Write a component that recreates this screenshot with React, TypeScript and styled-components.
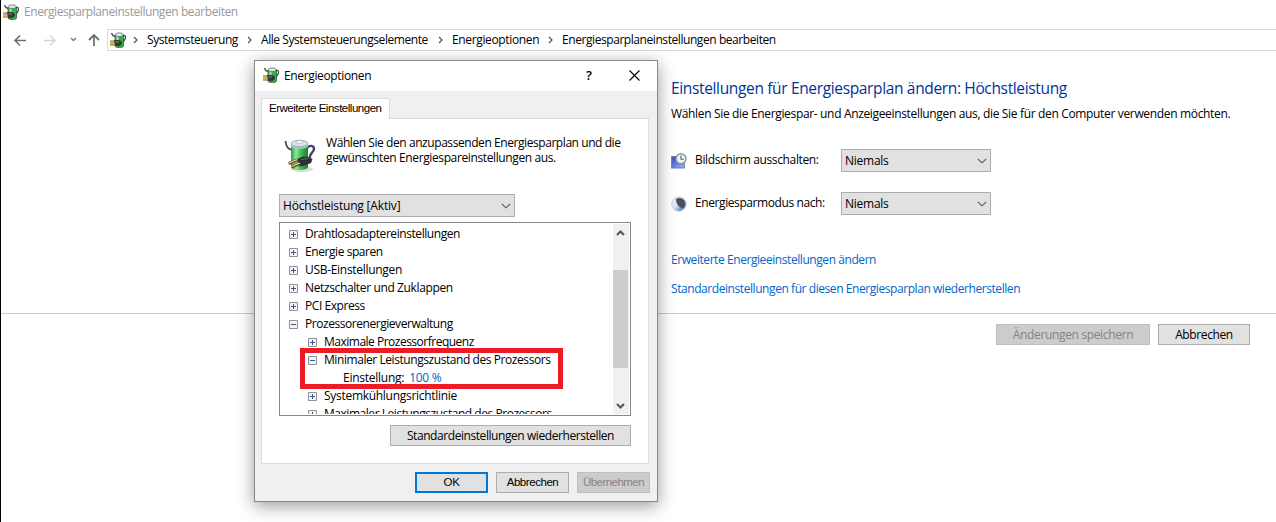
import styled, { createGlobalStyle } from 'styled-components';
import type { ReactNode } from 'react';

const GlobalStyle = createGlobalStyle`
  * {
    box-sizing: border-box;
  }

  body {
    margin: 0;
    background: #fff;
    color: #000;
    font-family: 'Open Sans', 'Noto Sans', sans-serif;
    font-size: 12px;
    line-height: 15px;
    overflow: hidden;
  }
`;

const Text = styled.span<{ $spacing?: number }>`
  white-space: nowrap;
  letter-spacing: ${props => props.$spacing ?? -0.43}px;
`;

const Page = styled.div`
  position: relative;
  width: 1276px;
  height: 522px;
  border-left: 1px solid #000;
  overflow: hidden;
`;

const TitleBar = styled.header`
  display: flex;
  align-items: center;
  gap: 5px;
  height: 29px;
  padding: 0 0 6px 2px;
  color: #999;
`;

const NavBar = styled.nav`
  display: flex;
  height: 22px;
`;

const NavButtons = styled.div`
  display: flex;
  width: 106px;
  padding-left: 12px;
`;

const AddressBar = styled.div`
  display: flex;
  align-items: center;
  flex: 1;
  padding: 0 0 1px 2px;
  border: 1px solid #d9d9d9;
  border-right: none;
`;

const Crumbs = styled.div`
  display: flex;
  margin-left: 7px;
`;

const Crumb = styled.div<{ $width: number }>`
  display: flex;
  align-items: center;
  width: ${props => props.$width}px;
`;

const CrumbArrow = styled.svg`
  flex: none;
  width: 5px;
  height: 8px;
  margin-right: 9px;
`;

const Content = styled.main`
  height: 263px;
  padding: 27px 0 0 670px;
  border-bottom: 1px solid #ccc;
`;

const Heading = styled.h1`
  margin: 0;
  color: #003399;
  font-size: 15.5px;
  font-weight: 400;
  line-height: 20px;
`;

const Intro = styled.p`
  margin: 8px 0 28px;
`;

const SettingRow = styled.div`
  display: flex;
  align-items: center;
  height: 23px;
  margin-bottom: 20px;
`;

const SettingLabel = styled.div`
  width: 146px;
  margin-left: 8px;
  padding-bottom: 2px;
`;

const Select = styled.div<{ $width: number }>`
  display: flex;
  align-items: center;
  justify-content: space-between;
  width: ${props => props.$width}px;
  height: 23px;
  padding: 0 3px;
  background: #e1e1e1;
  border: 1px solid #adadad;
`;

const Links = styled.div`
  display: flex;
  flex-direction: column;
  gap: 14px;
  padding-top: 17px;
`;

const Link = styled.a`
  color: #0066cc;
`;

const PageActions = styled.footer`
  display: flex;
  gap: 8px;
  padding: 10px 0 0 995px;
`;

const Button = styled.button<{ $width: number; $primary?: boolean }>`
  display: flex;
  align-items: center;
  justify-content: center;
  width: ${props => props.$width}px;
  height: 21px;
  padding: 0;
  background: #e1e1e1;
  border: ${props => (props.$primary ? '2px solid #0078d7' : '1px solid #adadad')};
  color: #000;
  font: inherit;

  &:disabled {
    background: #ccc;
    border-color: #bfbfbf;
    color: #838383;
  }
`;

const Dialog = styled.section`
  position: absolute;
  top: 60px;
  left: 253px;
  width: 404px;
  height: 442px;
  background: #f0f0f0;
  border: 1px solid #888;
  box-shadow: 0 4px 16px rgba(0, 0, 0, 0.4);
`;

const DialogTitle = styled.div`
  display: flex;
  align-items: center;
  height: 30px;
  padding: 0 17px 2px 8px;
  background: #fff;
`;

const DialogName = styled.div`
  flex: 1;
  margin-left: 5px;
`;

const HelpMark = styled.span`
  margin-right: 37px;
  font-size: 13px;
  font-weight: 600;
`;

const Tab = styled.div`
  position: relative;
  width: 129px;
  height: 21px;
  margin: 7px 0 -1px 6px;
  padding: 2px 0 0 7px;
  background: #fff;
  border: 1px solid #dcdcdc;
  border-bottom: none;
  font-family: 'Liberation Sans', sans-serif;
  font-size: 11.5px;
`;

const Panel = styled.div`
  width: 388px;
  height: 346px;
  margin-left: 6px;
  padding: 16px 17px 0;
  background: #fff;
  border: 1px solid #dcdcdc;
`;

const Description = styled.div`
  display: flex;
  gap: 10px;
  height: 59px;
  padding-left: 5px;
`;

const DescriptionText = styled.div`
  display: flex;
  flex-direction: column;
`;

const TreeBox = styled.div`
  display: flex;
  width: 352px;
  height: 194px;
  margin: 5px 0 9px;
  padding: 1px;
  border: 1px solid #828790;
`;

const Tree = styled.div`
  position: relative;
  flex: 1;
  overflow: hidden;
`;

const TreeRow = styled.div<{ $indent: number }>`
  display: flex;
  align-items: flex-start;
  height: 18px;
  padding: 2px 0 0 ${props => props.$indent}px;
`;

const ExpanderSvg = styled.svg`
  flex: none;
  width: 9px;
  height: 9px;
  margin: 4px 7px 0 0;
`;

const Value = styled.span`
  margin-left: 5px;
  color: #0066cc;
  letter-spacing: -0.3px;
`;

const Highlight = styled.div`
  position: absolute;
  top: 124px;
  left: 19px;
  width: 263px;
  height: 41px;
  border: 5px solid #ed1c24;
`;

const ScrollBar = styled.div`
  display: flex;
  flex-direction: column;
  width: 16px;
  background: #f0f0f0;
`;

const ScrollArrow = styled.svg`
  width: 15px;
  height: 17px;
`;

const ScrollThumb = styled.div`
  width: 15px;
  height: 98px;
  margin: 29px 0;
  background: #cdcdcd;
`;

const PanelActions = styled.div`
  display: flex;
  justify-content: flex-end;
  width: 352px;
`;

const DialogActions = styled.div`
  display: flex;
  gap: 8px;
  margin: 8px 0 0 160px;
  font-family: 'Liberation Sans', sans-serif;
  font-size: 11.5px;
`;

const IconSvg = styled.svg`
  flex: none;
`;

const LargeIconSvg = styled(IconSvg)`
  margin-top: 3px;
`;

const BatteryIcon = () => (
  <LargeIconSvg width="32" height="34" viewBox="0 0 32 34">
    <defs>
      <linearGradient id="cell">
        <stop offset="0" stopColor="#2e9a3e" />
        <stop offset="0.3" stopColor="#8ce89a" />
        <stop offset="0.55" stopColor="#43c557" />
        <stop offset="1" stopColor="#1e7a30" />
      </linearGradient>
    </defs>
    <ellipse cx="18" cy="31" rx="11" ry="3" fill="#d9dcd9" />
    <path d="M1.5 3c.5 5 2.5 8 5.5 8.5" fill="none" stroke="#454b66" strokeWidth="1.8" />
    <path d="M23 10c2-3 7-3 7 1 0 3-5 5-4 9" fill="none" stroke="#3f4560" strokeWidth="2.4" />
    <path d="M7 6v23c0 4 17 4 17 0V6z" fill="url(#cell)" />
    <path d="M7 6v2.5c2 3 15 3 17 0V6z" fill="#b7c4cc" />
    <ellipse cx="15.5" cy="5.5" rx="8.5" ry="3.2" fill="#d7e2ea" stroke="#8f9ea9" strokeWidth="0.8" />
    <ellipse cx="15.5" cy="4" rx="3.5" ry="1.5" fill="#f8fbff" stroke="#9cabb8" strokeWidth="0.6" />
    <path d="m13 21 6-2.5 5 .5 4.5 2-1.5 4-8 3-4 .5z" fill="#2c2e38" />
    <path d="m17 21.5 7-1" stroke="#666a78" />
    <path d="m4.5 25.5 9-3.5M7.5 29l8.5-3.5" stroke="#74552e" strokeWidth="3" />
    <path d="m4.5 25 9-3.5M7.5 28.5l8.5-3.5" stroke="#e8cf94" strokeWidth="1.3" />
  </LargeIconSvg>
);

const SmallBatteryIcon = () => (
  <IconSvg width="16" height="16" viewBox="0 0 16 16">
    <path d="M1.500 1c.5 2 1.5 3 3.5 3.5M13 3.500c3-.5 3.2 2 1.700 4s-1 3-3.700 4" fill="none" stroke="#454a49" strokeWidth="1.3" />
    <path d="M5 3v11c0 2 8.500 2 8.500 0V3z" fill="#30b33f" stroke="#27672f" strokeWidth="0.8" />
    <path d="M7.500 4v5" stroke="#a3f1a5" strokeWidth="2" />
    <ellipse cx="9.2" cy="2.7" rx="4" ry="1.8" fill="#e4ecf5" stroke="#596472" strokeWidth="0.8" />
    <path d="M4 8h4.500c2 0 3.500 1.500 3.500 3s-1.500 3-3.500 3H5z" fill="#35373b" />
    <path d="M5.500 10H9" stroke="#85888c" />
    <path d="M0 9.500h4M0 12.500h4.500" stroke="#8a6712" strokeWidth="2" />
    <path d="M0 9.200h4M0 12.200h4.500" stroke="#e9bd38" strokeWidth="1" />
  </IconSvg>
);

const DisplayIcon = () => (
  <IconSvg width="16" height="16" viewBox="0 0 16 16">
    <defs>
      <linearGradient id="screen" x2="1" y2="1">
        <stop offset="0" stopColor="#2946c8" />
        <stop offset="1" stopColor="#9db5ff" />
      </linearGradient>
    </defs>
    <path d="M.7 3.5h12.5V15H.7z" fill="url(#screen)" stroke="#777f9c" strokeWidth="1.2" />
    <circle cx="10" cy="5.7" r="5" fill="#edf3f6" stroke="#8d9295" strokeWidth="1.4" />
    <path d="M10 2.5v3.7h2.8" fill="none" stroke="#4c6270" strokeWidth="1.1" />
  </IconSvg>
);

const MoonIcon = () => (
  <IconSvg width="16" height="16" viewBox="0 0 16 16">
    <defs>
      <linearGradient id="moon" x2="1" y2="1">
        <stop offset="0" stopColor="#e5e9ef" />
        <stop offset="0.45" stopColor="#dce9fb" />
        <stop offset="0.75" stopColor="#5f91d8" />
        <stop offset="1" stopColor="#d6dce5" />
      </linearGradient>
    </defs>
    <circle cx="8" cy="8" r="7.3" fill="url(#moon)" stroke="#cdd0d4" />
    <path d="M5 3c3-2 7-1 8.500 2s.5 6-1.500 7.500C8 11.500 5 8 5 3z" fill="#48505e" />
  </IconSvg>
);

const Chevron = () => (
  <svg width="10" height="6" viewBox="0 0 10 6">
    <path d="m.8.8 4.2 4 4.2-4" fill="none" stroke="#555" strokeWidth="1.1" />
  </svg>
);

const Expander = ({ open }: { open?: boolean }) => (
  <ExpanderSvg viewBox="0 0 9 9">
    <path d="M.5.5h8v8h-8z" fill="#f4f4f4" stroke="#919191" />
    <path d={open ? 'M2 4.5h5' : 'M2 4.5h5M4.5 2v5'} stroke="#3b5399" />
  </ExpanderSvg>
);

const crumbs = [
  { label: 'Systemsteuerung', width: 114 },
  { label: 'Alle Systemsteuerungselemente', width: 191 },
  { label: 'Energieoptionen', width: 110, spacing: -0.35 },
  { label: 'Energiesparplaneinstellungen bearbeiten', width: 240 },
];

interface TreeNode {
  label: string;
  indent: number;
  open?: boolean;
  value?: string;
  spacing?: number;
}

const nodes: TreeNode[] = [
  { label: 'Drahtlosadaptereinstellungen', indent: 8 },
  { label: 'Energie sparen', indent: 8 },
  { label: 'USB-Einstellungen', indent: 8, spacing: -0.3 },
  { label: 'Netzschalter und Zuklappen', indent: 8, spacing: -0.37 },
  { label: 'PCI Express', indent: 8 },
  { label: 'Prozessorenergieverwaltung', indent: 8, open: true, spacing: -0.45 },
  { label: 'Maximale Prozessorfrequenz', indent: 27, spacing: -0.5 },
  { label: 'Minimaler Leistungszustand des Prozessors', indent: 27, open: true },
  { label: 'Einstellung:', indent: 62, value: '100 %', spacing: -0.25 },
  { label: 'Systemkühlungsrichtlinie', indent: 27, spacing: -0.29 },
  { label: 'Maximaler Leistungszustand des Prozessors', indent: 27, spacing: -0.46 },
];

const Setting = ({ icon, label, spacing }: { icon: ReactNode; label: string; spacing?: number }) => (
  <SettingRow>
    {icon}
    <SettingLabel><Text $spacing={spacing}>{label}</Text></SettingLabel>
    <Select $width={150}><Text $spacing={-0.25}>Niemals</Text><Chevron /></Select>
  </SettingRow>
);

const App = () => (
  <>
    <GlobalStyle />
    <Page>
      <TitleBar><SmallBatteryIcon /><Text>Energiesparplaneinstellungen bearbeiten</Text></TitleBar>
      <NavBar>
        <NavButtons>
          <svg width="90" height="22" viewBox="0 0 90 22" fill="none">
            <path d="M2 11.5h11M7 6.5l-5 5 5 5" stroke="#707070" strokeWidth="1.6" />
            <path d="M31 11.5h11M37 6.5l5 5-5 5" stroke="#d4d4d4" strokeWidth="1.4" />
            <path d="m58 9 2.5 2.5L63 9" stroke="#777" strokeWidth="1.3" />
            <path d="M81 17V6M76 11l5-5 5 5" stroke="#707070" strokeWidth="1.8" />
          </svg>
        </NavButtons>
        <AddressBar>
          <SmallBatteryIcon />
          <Crumbs>
            {crumbs.map(crumb => (
              <Crumb key={crumb.label} $width={crumb.width}>
                <CrumbArrow viewBox="0 0 5 8"><path d="m1 1 3 3-3 3" fill="none" stroke="#555" strokeWidth="1.2" /></CrumbArrow>
                <Text $spacing={crumb.spacing}>{crumb.label}</Text>
              </Crumb>
            ))}
          </Crumbs>
        </AddressBar>
      </NavBar>
      <Content>
        <Heading><Text $spacing={-0.35}>Einstellungen für Energiesparplan ändern: Höchstleistung</Text></Heading>
        <Intro><Text $spacing={-0.34}>Wählen Sie die Energiespar- und Anzeigeeinstellungen aus, die Sie für den Computer verwenden möchten.</Text></Intro>
        <Setting icon={<DisplayIcon />} label="Bildschirm ausschalten:" spacing={-0.36} />
        <Setting icon={<MoonIcon />} label="Energiesparmodus nach:" spacing={-0.41} />
        <Links>
          <Link><Text>Erweiterte Energieeinstellungen ändern</Text></Link>
          <Link><Text>Standardeinstellungen für diesen Energiesparplan wiederherstellen</Text></Link>
        </Links>
      </Content>
      <PageActions>
        <Button $width={154} disabled><Text $spacing={-0.35}>Änderungen speichern</Text></Button>
        <Button $width={92}><Text $spacing={-0.38}>Abbrechen</Text></Button>
      </PageActions>

      <Dialog>
        <DialogTitle>
          <SmallBatteryIcon />
          <DialogName><Text $spacing={-0.35}>Energieoptionen</Text></DialogName>
          <HelpMark>?</HelpMark>
          <svg width="11" height="11" viewBox="0 0 11 11"><path d="m.5.5 10 10m0-10-10 10" stroke="#000" strokeWidth="1.1" /></svg>
        </DialogTitle>
        <Tab><Text $spacing={-0.48}>Erweiterte Einstellungen</Text></Tab>
        <Panel>
          <Description>
            <BatteryIcon />
            <DescriptionText>
              <Text>Wählen Sie den anzupassenden Energiesparplan und die</Text>
              <Text $spacing={-0.38}>gewünschten Energiespareinstellungen aus.</Text>
            </DescriptionText>
          </Description>
          <Select $width={236}><Text $spacing={-0.18}>Höchstleistung [Aktiv]</Text><Chevron /></Select>
          <TreeBox>
            <Tree>
              {nodes.map(node => (
                <TreeRow key={node.label} $indent={node.indent}>
                  {!node.value && <Expander open={node.open} />}
                  <Text $spacing={node.spacing}>{node.label}</Text>
                  {node.value && <Value>{node.value}</Value>}
                </TreeRow>
              ))}
              <Highlight />
            </Tree>
            <ScrollBar>
              <ScrollArrow viewBox="0 0 15 17"><path d="m4 11 3.5-3.5L11 11" fill="none" stroke="#555" strokeWidth="2" /></ScrollArrow>
              <ScrollThumb />
              <ScrollArrow viewBox="0 0 15 17"><path d="m4 7 3.5 3.5L11 7" fill="none" stroke="#555" strokeWidth="2" /></ScrollArrow>
            </ScrollBar>
          </TreeBox>
          <PanelActions><Button $width={241}><Text>Standardeinstellungen wiederherstellen</Text></Button></PanelActions>
        </Panel>
        <DialogActions>
          <Button $width={73} $primary><Text $spacing={-0.2}>OK</Text></Button>
          <Button $width={73}><Text $spacing={-0.45}>Abbrechen</Text></Button>
          <Button $width={73} disabled><Text $spacing={-0.55}>Übernehmen</Text></Button>
        </DialogActions>
      </Dialog>
    </Page>
  </>
);

export default App;
